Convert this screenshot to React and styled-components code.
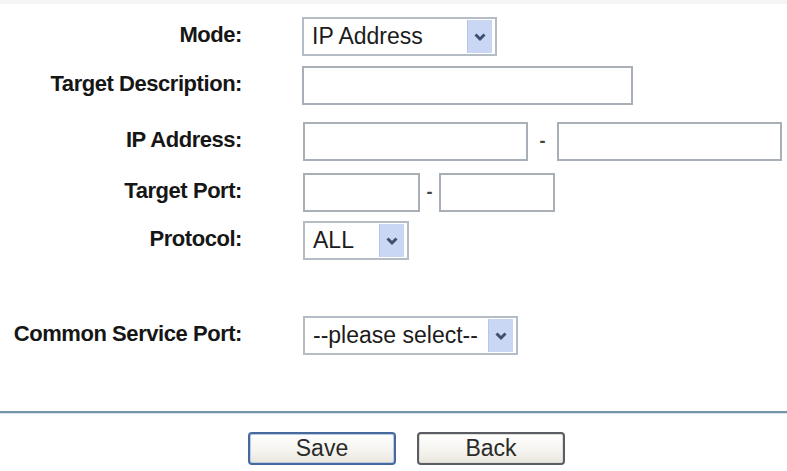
import React from "react";
import styled, { createGlobalStyle } from "styled-components";

const Global = createGlobalStyle`
  html, body { margin: 0; padding: 0; background: #ffffff; }
  body { font-family: "Liberation Sans", Arial, sans-serif; }
`;

const Page = styled.div`
  width: 787px;
  height: 471px;
  background: #ffffff;
  overflow: hidden;
  display: flex;
  flex-direction: column;
  border-top: 4px solid #f3f5f7;
  box-sizing: border-box;
`;

const Form = styled.div`
  display: flex;
  flex-direction: column;
  padding-top: 13px;
`;

const Row = styled.div`
  display: flex;
  align-items: center;
  margin-top: ${(p) => p.$mt || 0}px;
  height: 39px;
`;

const Label = styled.div`
  width: 242px;
  flex: none;
  text-align: right;
  font-weight: bold;
  font-size: 22px;
  color: #161616;
  letter-spacing: -0.45px;
  position: relative;
  top: -2px;
`;

const Fields = styled.div`
  display: flex;
  align-items: center;
  margin-left: ${(p) => p.$ml || 60}px;
`;

const Input = styled.div`
  width: ${(p) => p.$w}px;
  height: 39px;
  box-sizing: border-box;
  border: 2px solid #a9afb6;
  background: #ffffff;
`;

const Dash = styled.span`
  width: ${(p) => p.$w}px;
  text-align: center;
  font-size: 18px;
  font-weight: bold;
  color: #444;
`;

const Select = styled.div`
  width: ${(p) => p.$w}px;
  height: 39px;
  box-sizing: border-box;
  border: 2px solid #b4bcc6;
  background: #ffffff;
  display: flex;
  align-items: center;
  padding: 0 3px 0 8px;
  font-size: 23px;
  color: #1c1c1c;
`;

const SelectText = styled.span`
  flex: 1;
  white-space: nowrap;
`;

const Arrow = styled.div`
  width: 24px;
  height: 33px;
  background: #c9d7f4;
  border-left: 1px solid #b6c6e6;
  display: flex;
  align-items: center;
  justify-content: center;
`;

const Separator = styled.div`
  margin-top: 56px;
  height: 2px;
  background: #7596a9;
  box-shadow: 0 1px 0 #d6e4ec;
`;

const Buttons = styled.div`
  display: flex;
  justify-content: flex-start;
  gap: 21px;
  padding-left: 248px;
  margin-top: 19px;
`;

const Button = styled.div`
  width: 148px;
  height: 33px;
  box-sizing: border-box;
  border: 2px solid ${(p) => (p.$primary ? "#48699b" : "#5a5d63")};
  border-radius: 4px;
  background: linear-gradient(#ffffff, #f4f3ee 60%, #e9e6dc);
  box-shadow: ${(p) => (p.$primary ? "inset 0 0 0 1px #b9cbe6" : "inset 0 0 0 1px #e0ddd4")};
  display: flex;
  align-items: center;
  justify-content: center;
  font-size: 23px;
  color: #2a2a2a;
`;

const Chevron = () => (
  <svg width="14" height="10" viewBox="0 0 14 10">
    <path d="M2.5 2.5 L7 7 L11.5 2.5" fill="none" stroke="#3e4e6e" strokeWidth="3" strokeLinejoin="miter" />
  </svg>
);

const Dropdown = ({ w, text }) => (
  <Select $w={w}>
    <SelectText>{text}</SelectText>
    <Arrow>
      <Chevron />
    </Arrow>
  </Select>
);

export default function App() {
  return (
    <>
      <Global />
      <Page>
        <Form>
          <Row>
            <Label>Mode:</Label>
            <Fields>
              <Dropdown w={195} text="IP Address" />
            </Fields>
          </Row>
          <Row $mt={10}>
            <Label>Target Description:</Label>
            <Fields>
              <Input $w={331} />
            </Fields>
          </Row>
          <Row $mt={17}>
            <Label>IP Address:</Label>
            <Fields $ml={61}>
              <Input $w={225} />
              <Dash $w={29}>-</Dash>
              <Input $w={225} />
            </Fields>
          </Row>
          <Row $mt={12}>
            <Label>Target Port:</Label>
            <Fields $ml={61}>
              <Input $w={117} />
              <Dash $w={19}>-</Dash>
              <Input $w={116} />
            </Fields>
          </Row>
          <Row $mt={9}>
            <Label>Protocol:</Label>
            <Fields $ml={61}>
              <Dropdown w={106} text="ALL" />
            </Fields>
          </Row>
          <Row $mt={56}>
            <Label>Common Service Port:</Label>
            <Fields $ml={61}>
              <Dropdown w={215} text="--please select--" />
            </Fields>
          </Row>
        </Form>
        <Separator />
        <Buttons>
          <Button $primary>Save</Button>
          <Button>Back</Button>
        </Buttons>
      </Page>
    </>
  );
}
